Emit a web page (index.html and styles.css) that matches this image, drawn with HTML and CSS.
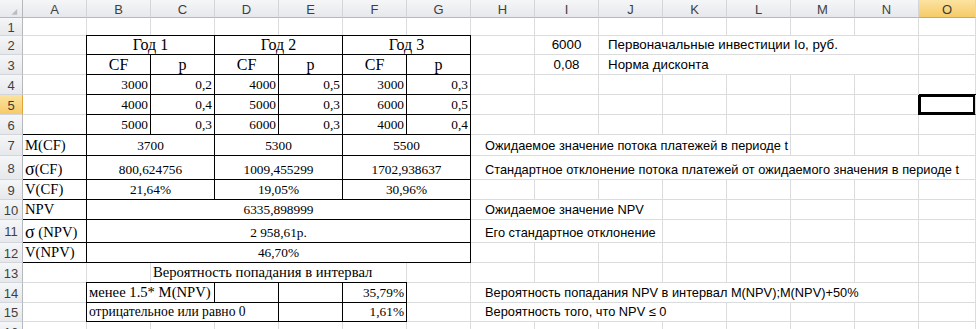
FILE: index.html
```html
<!DOCTYPE html>
<html lang="ru">
<head>
    <meta charset="UTF-8">
    <title>Оценка риска инвестиционного проекта</title>
    <link rel="stylesheet" href="styles.css">
</head>
<body>
    <div class="sheet">
        <!-- заголовки столбцов -->
        <div class="corner">
            <svg width="23" height="18" viewBox="0 0 23 18"><polygon points="18,9 18,15 12,15" fill="#b9bcc0"/></svg>
        </div>
        <div class="hd">A</div><div class="hd">B</div><div class="hd">C</div><div class="hd">D</div><div class="hd">E</div>
        <div class="hd">F</div><div class="hd">G</div><div class="hd">H</div><div class="hd">I</div><div class="hd">J</div>
        <div class="hd">K</div><div class="hd">L</div><div class="hd">M</div><div class="hd">N</div><div class="hd on">O</div>

        <!-- 1 -->
        <div class="rh">1</div>
        <div class="c"></div><div class="c"></div><div class="c"></div><div class="c"></div><div class="c"></div>
        <div class="c"></div><div class="c"></div><div class="c"></div><div class="c"></div><div class="c"></div>
        <div class="c"></div><div class="c"></div><div class="c"></div><div class="c"></div><div class="c"></div>

        <!-- 2 -->
        <div class="rh">2</div>
        <div class="c"></div>
        <div class="c t m w2 big">Год 1</div>
        <div class="c t m w2 big">Год 2</div>
        <div class="c t m w2 big">Год 3</div>
        <div class="c"></div>
        <div class="c n m">6000</div>
        <div class="c n j w5">Первоначальные инвестиции Io, руб.</div>
        <div class="c"></div>

        <!-- 3 -->
        <div class="rh">3</div>
        <div class="c"></div>
        <div class="c t m big">CF</div><div class="c t m big">p</div>
        <div class="c t m big">CF</div><div class="c t m big">p</div>
        <div class="c t m big">CF</div><div class="c t m big">p</div>
        <div class="c"></div>
        <div class="c n m">0,08</div>
        <div class="c n j w5">Норма дисконта</div>
        <div class="c"></div>

        <!-- 4 -->
        <div class="rh">4</div>
        <div class="c"></div>
        <div class="c t r">3000</div><div class="c t r">0,2</div>
        <div class="c t r">4000</div><div class="c t r">0,5</div>
        <div class="c t r">3000</div><div class="c t r">0,3</div>
        <div class="c"></div><div class="c"></div><div class="c"></div><div class="c"></div>
        <div class="c"></div><div class="c"></div><div class="c"></div><div class="c"></div>

        <!-- 5 -->
        <div class="rh on">5</div>
        <div class="c"></div>
        <div class="c t r">4000</div><div class="c t r">0,4</div>
        <div class="c t r">5000</div><div class="c t r">0,3</div>
        <div class="c t r">6000</div><div class="c t r">0,5</div>
        <div class="c"></div><div class="c"></div><div class="c"></div><div class="c"></div>
        <div class="c"></div><div class="c"></div><div class="c"></div><div class="c sel"></div>

        <!-- 6 -->
        <div class="rh">6</div>
        <div class="c"></div>
        <div class="c t r">5000</div><div class="c t r">0,3</div>
        <div class="c t r">6000</div><div class="c t r">0,3</div>
        <div class="c t r">4000</div><div class="c t r">0,4</div>
        <div class="c"></div><div class="c"></div><div class="c"></div><div class="c"></div>
        <div class="c"></div><div class="c"></div><div class="c"></div><div class="c"></div>

        <!-- 7 -->
        <div class="rh">7</div>
        <div class="c t ta lab">M(CF)</div>
        <div class="c t m w2">3700</div>
        <div class="c t m w2">5300</div>
        <div class="c t m w2">5500</div>
        <div class="c n h w5">Ожидаемое значение потока платежей в периоде t</div>
        <div class="c"></div><div class="c"></div><div class="c"></div>

        <!-- 8 -->
        <div class="rh">8</div>
        <div class="c t ta lab"><span class="sig">σ</span>(CF)</div>
        <div class="c t m w2">800,624756</div>
        <div class="c t m w2">1009,455299</div>
        <div class="c t m w2">1702,938637</div>
        <div class="c n h w8">Стандартное отклонение потока платежей от ожидаемого значения в периоде t</div>

        <!-- 9 -->
        <div class="rh">9</div>
        <div class="c t ta lab">V(CF)</div>
        <div class="c t m w2">21,64%</div>
        <div class="c t m w2">19,05%</div>
        <div class="c t m w2">30,96%</div>
        <div class="c"></div><div class="c"></div><div class="c"></div><div class="c"></div>
        <div class="c"></div><div class="c"></div><div class="c"></div><div class="c"></div>

        <!-- 10 -->
        <div class="rh">10</div>
        <div class="c t ta lab">NPV</div>
        <div class="c t m w6">6335,898999</div>
        <div class="c n h w3">Ожидаемое значение NPV</div>
        <div class="c"></div><div class="c"></div><div class="c"></div><div class="c"></div><div class="c"></div>

        <!-- 11 -->
        <div class="rh">11</div>
        <div class="c t ta lab"><span class="sig">σ</span>&nbsp;(NPV)</div>
        <div class="c t m w6">2 958,61р.</div>
        <div class="c n h w3">Его стандартное отклонение</div>
        <div class="c"></div><div class="c"></div><div class="c"></div><div class="c"></div><div class="c"></div>

        <!-- 12 -->
        <div class="rh">12</div>
        <div class="c t ta lab">V(NPV)</div>
        <div class="c t m w6">46,70%</div>
        <div class="c"></div><div class="c"></div><div class="c"></div><div class="c"></div>
        <div class="c"></div><div class="c"></div><div class="c"></div><div class="c"></div>

        <!-- 13 -->
        <div class="rh">13</div>
        <div class="c"></div>
        <div class="c"></div>
        <div class="c w4 lab">Вероятность попадания в интервал</div>
        <div class="c"></div>
        <div class="c"></div><div class="c"></div><div class="c"></div><div class="c"></div>
        <div class="c"></div><div class="c"></div><div class="c"></div><div class="c"></div>

        <!-- 14 -->
        <div class="rh">14</div>
        <div class="c"></div>
        <div class="c t w2 lab">менее 1.5* M(NPV)</div>
        <div class="c t"></div>
        <div class="c t"></div>
        <div class="c t r">35,79%</div>
        <div class="c"></div>
        <div class="c n h w7">Вероятность попадания NPV в интервал M(NPV);M(NPV)+50%</div>
        <div class="c"></div>

        <!-- 15 -->
        <div class="rh">15</div>
        <div class="c"></div>
        <div class="c t w3 sm">отрицательное или равно 0</div>
        <div class="c t"></div>
        <div class="c t r">1,61%</div>
        <div class="c"></div>
        <div class="c n h w4">Вероятность того, что NPV ≤ 0</div>
        <div class="c"></div><div class="c"></div><div class="c"></div><div class="c"></div>

        <!-- 16 -->
        <div class="rh">16</div>
        <div class="c"></div><div class="c"></div><div class="c"></div><div class="c"></div><div class="c"></div>
        <div class="c"></div><div class="c"></div><div class="c"></div><div class="c"></div><div class="c"></div>
        <div class="c"></div><div class="c"></div><div class="c"></div><div class="c"></div><div class="c"></div>
    </div>
</body>
</html>
```

FILE: styles.css
```css
* {
    margin: 0;
    padding: 0;
    box-sizing: border-box;
}

body {
    background: #ffffff;
    color: #000000;
    font-family: "Liberation Serif", "Times New Roman", serif;
    font-size: 13.33px;
}

.sheet {
    display: grid;
    grid-template-columns: 23px 64px repeat(13, 64px) 1fr;
    grid-template-rows: 18px 18px 19px 20px 20px 20px 20px 21px 24px 20px 20px 23px 20px 20px 20px 19px 20px;
    width: 976px;
    height: 329px;
    overflow: hidden;
}

/* заголовки строк и столбцов */
.corner,
.hd,
.rh {
    background: linear-gradient(#f5f6f8, #e6e8eb);
    color: #3f3f3f;
    font-family: "Liberation Sans", Arial, sans-serif;
    font-size: 13px;
    display: flex;
    align-items: center;
    justify-content: center;
}

.corner {
    border-right: 1px solid #b5b9be;
    border-bottom: 1px solid #b5b9be;
}

.corner svg {
    display: block;
}

.hd {
    border-right: 1px solid #d2d5d9;
    border-bottom: 1px solid #b5b9be;
    padding-top: 1px;
}

.rh {
    border-right: 1px solid #b5b9be;
    border-bottom: 1px solid #d2d5d9;
    padding-top: 1px;
}

.hd.on,
.rh.on {
    background: linear-gradient(#fbe3a0, #f6cb68);
    color: #3a3a3a;
}

.hd.on {
    border-bottom-color: #e0a53a;
}

.rh.on {
    border-right-color: #e0a53a;
}

/* ячейки листа */
.c {
    border-right: 1px solid #dadcdd;
    border-bottom: 1px solid #dadcdd;
    display: flex;
    align-items: flex-end;
    padding: 0 2px 2px 2px;
    line-height: 15px;
    white-space: nowrap;
}

.w2 { grid-column: span 2; }
.w3 { grid-column: span 3; }
.w4 { grid-column: span 4; }
.w5 { grid-column: span 5; }
.w6 { grid-column: span 6; }
.w7 { grid-column: span 7; }
.w8 { grid-column: span 8; }

.m { justify-content: center; }
.r { justify-content: flex-end; }

.big { font-size: 16px; }
.lab { font-size: 14.67px; }
.sm { font-size: 13.6px; }

/* тонкая чёрная рамка таблицы */
.t {
    border-right-color: #000000;
    border-bottom-color: #000000;
    box-shadow: 0 -1px #000000, -1px 0 #000000, -1px -1px #000000;
}

.t.ta {
    box-shadow: 0 -1px #000000;
}

.sig {
    font-size: 18px;
    line-height: 15px;
}

/* пояснения справа */
.n {
    font-family: "Liberation Sans", Arial, sans-serif;
    font-size: 13.33px;
}

.n.h {
    padding-left: 14px;
    font-size: 12.8px;
}

.n.j { padding-left: 9px; }

.sel {
    border-bottom-color: #000000;
    box-shadow: inset 0 0 0 2px #000000, 0 -1px #000000, -1px 0 #000000;
}
```
